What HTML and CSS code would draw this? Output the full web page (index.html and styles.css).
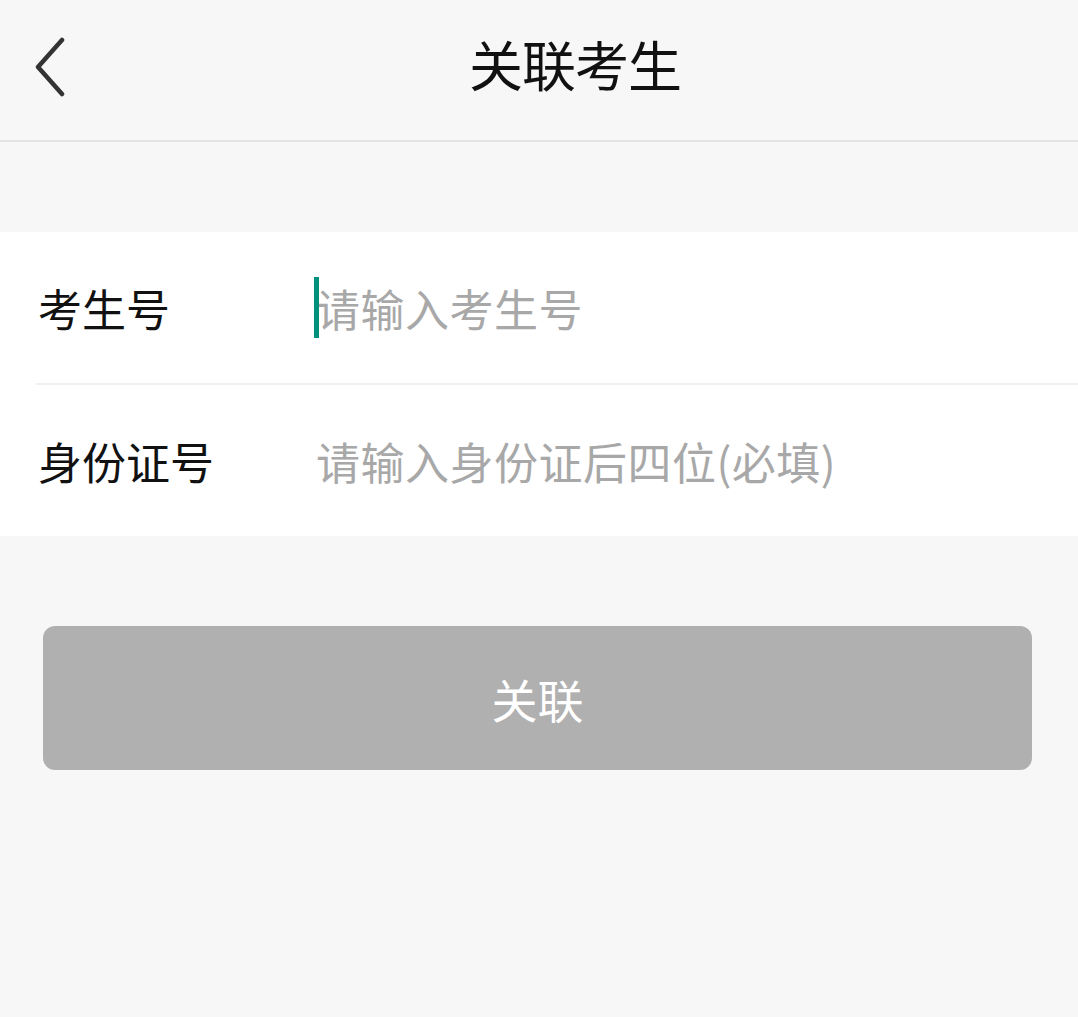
FILE: index.html
```html
<!DOCTYPE html>
<html lang="zh-CN">
<head>
<meta charset="utf-8">
<link rel="stylesheet" href="styles.css">
</head>
<body>
<div class="page">
  <header class="navbar">
    <button class="back" aria-label="返回">
      <svg width="34" height="60" viewBox="0 0 34 60"><path d="M30 3 L6 30 L30 57" fill="none" stroke="#333" stroke-width="4.5" stroke-linecap="round" stroke-linejoin="round"/></svg>
    </button>
    <h1 class="title">关联考生</h1>
  </header>
  <div class="gap"></div>
  <section class="form">
    <div class="row">
      <span class="label">考生号</span>
      <span class="field focused"><span class="caret"></span><span class="ph">请输入考生号</span></span>
    </div>
    <div class="divider"></div>
    <div class="row">
      <span class="label">身份证号</span>
      <span class="field"><span class="ph">请输入身份证后四位(必填)</span></span>
    </div>
  </section>
  <div class="actions">
    <button class="submit">关联</button>
  </div>
</div>
</body>
</html>
```
FILE: styles.css
```css
html, body {
  margin: 0;
  padding: 0;
  background: #f7f7f7;
}
body {
  font-family: "Noto Sans CJK SC", "Noto Sans", sans-serif;
  width: 1078px;
  height: 1017px;
  overflow: hidden;
}
.navbar {
  height: 140px;
  box-sizing: content-box;
  border-bottom: 2px solid #e4e4e4;
  display: flex;
  align-items: center;
  background: #f7f7f7;
}
.back {
  border: 0;
  background: none;
  padding: 0;
  margin: 0 0 7px 32px;
  width: 34px;
  height: 60px;
  display: flex;
}
.title {
  margin: 0 0 14px 4px;
  flex: 1;
  text-align: center;
  font-size: 54px;
  font-weight: 400;
  color: #111;
  padding-left: 2px;
  letter-spacing: -1px;
}
.gap {
  height: 90px;
}
.form {
  background: #fff;
}
.row {
  height: 151px;
  display: flex;
  align-items: center;
  padding-left: 38px;
}
.divider {
  height: 2px;
  background: #f1f1f1;
  margin-left: 36px;
}
.label {
  width: 278px;
  font-size: 44px;
  color: #111;
  line-height: 1;
}
.field {
  display: flex;
  align-items: center;
  position: relative;
  font-size: 44px;
  line-height: 1;
  color: #a8a8a8;
  letter-spacing: 0.5px;
}
.focused .caret {
  position: absolute;
  left: -2px;
  top: -9px;
  width: 5px;
  height: 61px;
  background: #00907c;
}
.actions {
  padding: 90px 46px 0 43px;
}
.submit {
  width: 100%;
  height: 144px;
  border: 0;
  border-radius: 12px;
  background: #b0b0b0;
  color: #fff;
  font-family: "Noto Sans CJK SC", "Noto Sans", sans-serif;
  font-size: 46px;
  padding: 0;
}
```
